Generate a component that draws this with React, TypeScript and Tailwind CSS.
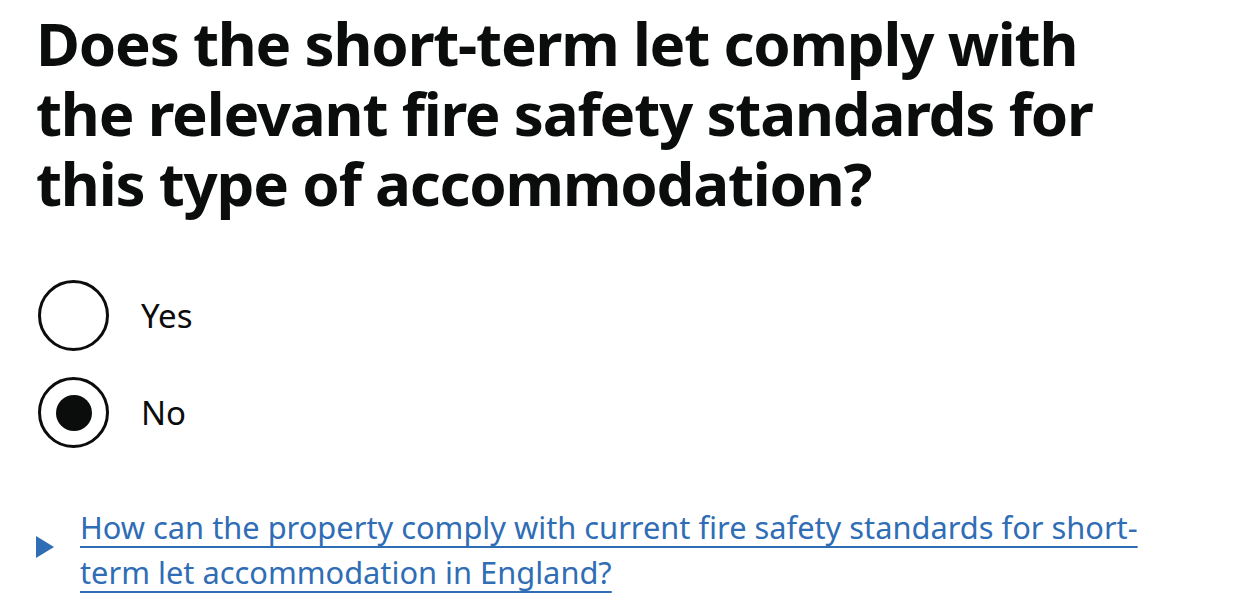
import * as React from "react"

const font = { fontFamily: '"Noto Sans", Arial, sans-serif' }

function Radio({ label, checked }: { label: string; checked?: boolean }) {
  return (
    <div className="flex items-center h-[71px]">
      <div className="w-[71px] h-[71px] rounded-full border-[3px] border-[#0b0c0c] flex items-center justify-center shrink-0">
        {checked && <div className="w-[36px] h-[36px] rounded-full bg-[#0b0c0c]" />}
      </div>
      <span className="ml-[32px] text-[33px] text-[#0b0c0c]">{label}</span>
    </div>
  )
}

export default function App() {
  return (
    <div className="min-h-screen bg-white pl-[36px] pr-[60px] pt-[8px]" style={font}>
      <h1 className="text-[60px] leading-[70px] font-bold text-[#0b0c0c] tracking-[-1.2px] max-w-[1100px]">
        Does the short-term let comply with the relevant fire safety standards for this type of accommodation?
      </h1>

      <div className="mt-[62px] flex flex-col gap-[26px] pl-[2px]">
        <Radio label="Yes" />
        <Radio label="No" checked />
      </div>

      <div className="mt-[57px] flex items-start">
        <svg width="20" height="22" viewBox="0 0 20 22" className="mt-[31px] shrink-0">
          <polygon points="0,0 18,11 0,22" fill="#2f6db5" />
        </svg>
        <a
          href="#"
          className="ml-[24px] text-[30.8px] leading-[45px] text-[#2f6db5] underline decoration-[2px] underline-offset-[7px] max-w-[1090px]"
        >
          How can the property comply with current fire safety standards for short-term let accommodation in England?
        </a>
      </div>
    </div>
  )
}
